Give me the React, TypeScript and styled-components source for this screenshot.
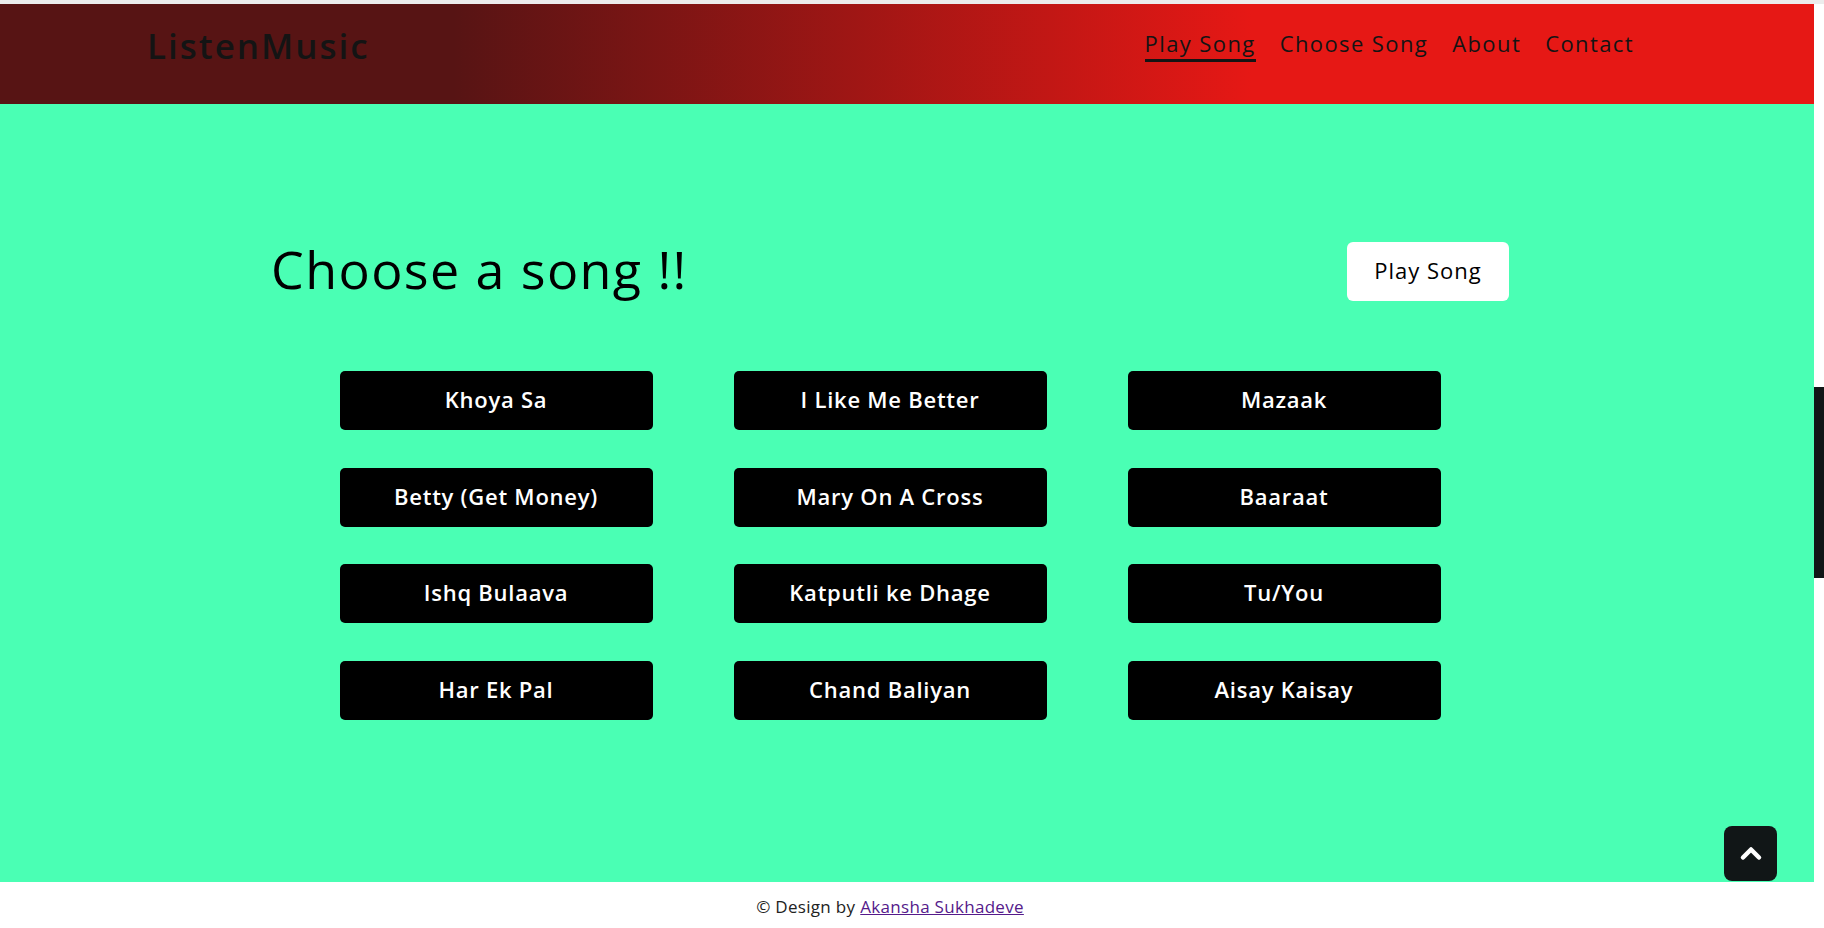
import React from "react";
import styled, { createGlobalStyle } from "styled-components";

const GlobalStyle = createGlobalStyle`
  html, body {
    margin: 0;
    padding: 0;
    background: #ffffff;
    overflow: hidden;
  }
  body {
    font-family: "Open Sans", "Noto Sans", sans-serif;
  }
  * { box-sizing: border-box; }
`;

const Page = styled.div`
  height: 100vh;
  display: grid;
  grid-template-rows: 4px 1fr;
  grid-template-columns: 1fr 10px;
`;

const TopStrip = styled.div`
  grid-column: 1 / -1;
  background: #ececec;
`;

const Viewport = styled.div`
  display: flex;
  flex-direction: column;
  min-height: 0;
`;

const ScrollTrack = styled.div`
  background: #ffffff;
`;

const ScrollThumb = styled.div`
  margin-top: 383px;
  height: 191px;
  background: #111617;
`;

const Header = styled.header`
  height: 100px;
  flex: 0 0 auto;
  display: flex;
  align-items: center;
  justify-content: space-between;
  padding: 0 180px 18px 147px;
  background: linear-gradient(90deg, #571414 25%, #e61815 69%);
`;

const Logo = styled.div`
  font-size: 35px;
  font-weight: 600;
  color: #141414;
  letter-spacing: 2px;
`;

const Nav = styled.nav`
  display: flex;
  gap: 24px;
  align-items: center;
`;

const NavLink = styled.a<{ $active?: boolean }>`
  font-size: 22px;
  font-weight: 400;
  color: #141414;
  letter-spacing: 1.4px;
  text-decoration: none;
  padding-bottom: 1px;
  border-bottom: 3px solid ${(p) => (p.$active ? "#141414" : "transparent")};
`;

const Main = styled.main`
  position: relative;
  flex: 1 1 auto;
  background: #4affb4;
  padding: 137px 34px 0 0;
  display: flex;
  flex-direction: column;
  align-items: center;
`;

const TitleRow = styled.div`
  width: 1238px;
  height: 60px;
  display: flex;
  align-items: center;
  justify-content: space-between;
`;

const Title = styled.h1`
  margin: 0 0 5px;
  font-size: 52px;
  font-weight: 400;
  color: #000;
  letter-spacing: 1.4px;
`;

const PlayButton = styled.button`
  width: 162px;
  height: 59px;
  border: none;
  border-radius: 6px;
  background: #ffffff;
  color: #000;
  font-family: inherit;
  font-size: 22px;
  font-weight: 400;
  letter-spacing: 1px;
  padding: 0 0 3px;
  cursor: pointer;
`;

const SongGrid = styled.div`
  margin-top: 70px;
  display: grid;
  grid-template-columns: repeat(3, 313px);
  column-gap: 81px;
  row-gap: 37.5px;
`;

const SongButton = styled.button`
  height: 59px;
  border: none;
  border-radius: 5px;
  background: #000;
  color: #fff;
  font-family: inherit;
  font-size: 22px;
  font-weight: 600;
  letter-spacing: 0.75px;
  padding: 0 0 3px;
  cursor: pointer;
`;

const ToTop = styled.button`
  position: absolute;
  right: 37px;
  bottom: 1px;
  width: 53px;
  height: 55px;
  border: none;
  border-radius: 8px;
  background: #111617;
  display: flex;
  align-items: center;
  justify-content: center;
  padding: 0 0 2px;
  cursor: pointer;
`;

const Footer = styled.footer`
  height: 46px;
  flex: 0 0 auto;
  background: #fff;
  display: flex;
  align-items: center;
  justify-content: center;
  padding: 2px 34px 0 0;
  font-size: 17px;
  letter-spacing: 0.3px;
  color: #222;
`;

const FooterLink = styled.a`
  color: #551a8b;
  text-decoration: underline;
  margin-left: 5px;
`;

const songs = [
  "Khoya Sa",
  "I Like Me Better",
  "Mazaak",
  "Betty (Get Money)",
  "Mary On A Cross",
  "Baaraat",
  "Ishq Bulaava",
  "Katputli ke Dhage",
  "Tu/You",
  "Har Ek Pal",
  "Chand Baliyan",
  "Aisay Kaisay",
];

export default function App() {
  return (
    <>
      <GlobalStyle />
      <Page>
        <TopStrip />
        <Viewport>
          <Header>
            <Logo>ListenMusic</Logo>
            <Nav>
              <NavLink href="#" $active>
                Play Song
              </NavLink>
              <NavLink href="#">Choose Song</NavLink>
              <NavLink href="#">About</NavLink>
              <NavLink href="#">Contact</NavLink>
            </Nav>
          </Header>
          <Main>
            <TitleRow>
              <Title>Choose a song !!</Title>
              <PlayButton>Play Song</PlayButton>
            </TitleRow>
            <SongGrid>
              {songs.map((s) => (
                <SongButton key={s}>{s}</SongButton>
              ))}
            </SongGrid>
            <ToTop aria-label="Back to top">
              <svg width="24" height="16" viewBox="0 0 24 16">
                <polyline
                  points="4,12.5 12,4.5 20,12.5"
                  fill="none"
                  stroke="#ffffff"
                  strokeWidth="4.5"
                  strokeLinecap="round"
                  strokeLinejoin="round"
                />
              </svg>
            </ToTop>
          </Main>
          <Footer>
            © Design by<FooterLink href="#">Akansha Sukhadeve</FooterLink>
          </Footer>
        </Viewport>
        <ScrollTrack>
          <ScrollThumb />
        </ScrollTrack>
      </Page>
    </>
  );
}
